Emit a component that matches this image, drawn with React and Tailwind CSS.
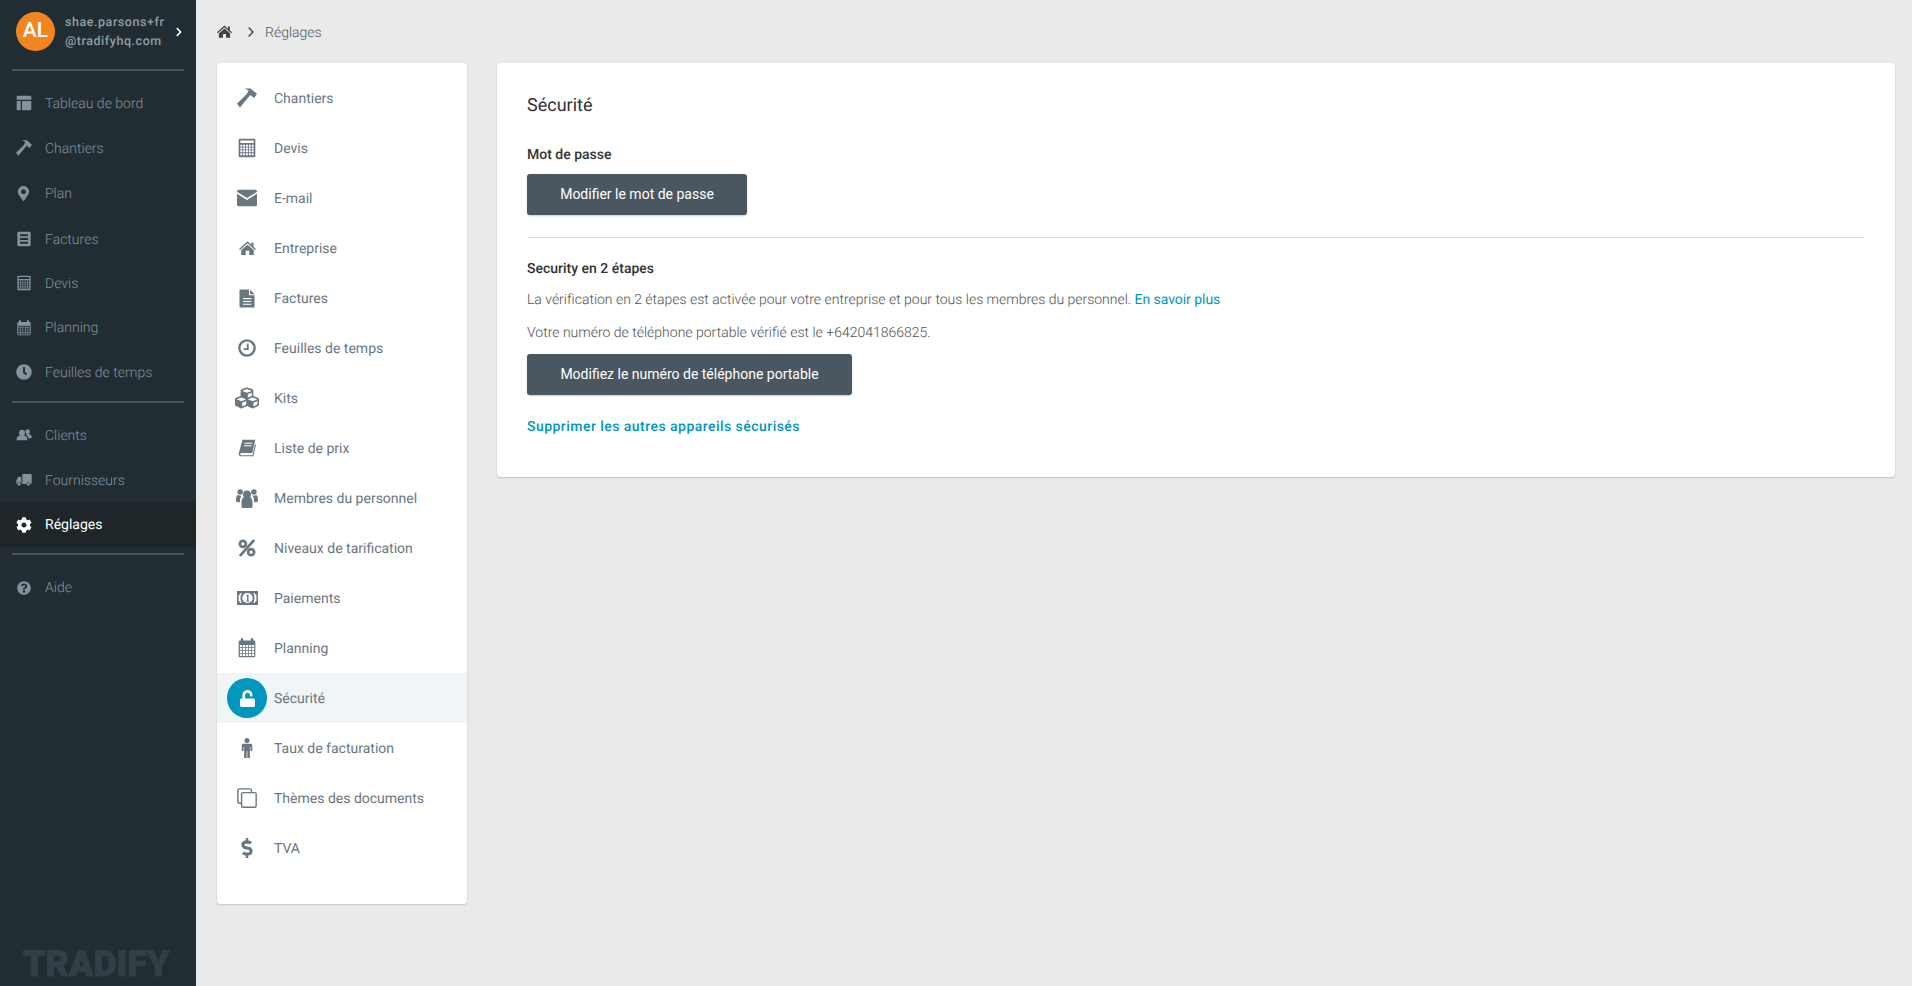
import React from "react";
import { ChevronRight } from "lucide-react";
import { FaMapMarkerAlt, FaClock, FaCog, FaQuestionCircle, FaCubes, FaUnlock, FaDollarSign, FaChevronRight } from "react-icons/fa";

const Hammer = ({ className }) => (
  <svg viewBox="0 0 24 24" className={className} fill="currentColor">
    <path d="M0 19 12 7 14 3 9 .5H16L24 7 20.500 12 16 8.500 3.500 23.500Z" />
  </svg>
);
const Dashboard = ({ className }) => (
  <svg viewBox="0 0 24 24" className={className} fill="currentColor">
    <path d="M3 1h18a2 2 0 0 1 2 2v4H1V3a2 2 0 0 1 2-2ZM1 9h6v14H3a2 2 0 0 1-2-2V9ZM9 9h14v12a2 2 0 0 1-2 2H9V9Z" />
  </svg>
);
const ListAlt = ({ className }) => (
  <svg viewBox="0 0 24 24" className={className} fill="currentColor" fillRule="evenodd">
    <path d="M4 1h16a2 2 0 0 1 2 2v18a2 2 0 0 1-2 2H4a2 2 0 0 1-2-2V3a2 2 0 0 1 2-2ZM6 5v3h12V5H6Zm0 5.500v3h12v-3H6ZM6 16v3h12v-3H6Z" />
  </svg>
);
function holes(xs, ys, w, h) {
  let d = "";
  for (const y of ys) for (const x of xs) d += `M${x} ${y}h${w}v${h}h-${w}Z`;
  return d;
}
const Calculator = ({ className }) => (
  <svg viewBox="0 0 24 24" className={className} fill="currentColor" fillRule="evenodd">
    <path d={"M3.500 1h17A1.500 1.500 0 0 1 22 2.500v19a1.500 1.500 0 0 1-1.500 1.500h-17A1.500 1.500 0 0 1 2 21.500v-19A1.500 1.500 0 0 1 3.500 1ZM4 3v3h16V3H4Z" + holes([4, 7.4, 10.8, 14.2, 17.6], [8, 11.4, 14.8, 18.2], 2.4, 2.4)} />
  </svg>
);
const Calendar = ({ className }) => (
  <svg viewBox="0 0 24 24" className={className} fill="currentColor" fillRule="evenodd">
    <path d={"M6 0a1.500 1.500 0 0 1 1.500 1.500V3h9V1.500a1.500 1.500 0 0 1 3 0V3h1A1.500 1.500 0 0 1 22 4.500v17a1.500 1.500 0 0 1-1.500 1.500h-17A1.500 1.500 0 0 1 2 21.500v-17A1.500 1.500 0 0 1 3.500 3h1V1.500A1.500 1.500 0 0 1 6 0Z" + holes([3.5, 7.1, 10.7, 14.3, 17.9], [8.5, 12, 15.5, 19], 2.7, 2.6)} />
  </svg>
);
const People = ({ className }) => (
  <svg viewBox="0 0 24 18" className={className} fill="currentColor">
    <circle cx="9" cy="5.500" r="4.500" />
    <path d="M1 17c-.6-5 2.500-7.500 8-7.500s8.600 2.500 8 7.500H1Z" />
    <circle cx="17.500" cy="4" r="3.500" />
    <path d="M14.600 8.400c1-.6 2-.8 3.400-.8 3.800 0 6 2 5.500 6.400h-4.800c-.4-2.600-2-4.400-4.100-5.600Z" />
  </svg>
);
const Truck = ({ className }) => (
  <svg viewBox="0 0 24 20" className={className} fill="currentColor">
    <path d="M9.500 1H22a1.500 1.500 0 0 1 1.500 1.500V15a1 1 0 0 1-1 1h-.6a3.500 3.500 0 0 0-6.800 0H9.500V1Z" />
    <path d="M8 5v11h-.100a3.500 3.500 0 0 0-6.800 0H.500v-5.500L3.500 5H8Z" />
    <circle cx="4.500" cy="16.500" r="2.200" />
    <circle cx="18.500" cy="16.500" r="2.200" />
  </svg>
);
const Home = ({ className }) => (
  <svg viewBox="0 0 24 20" className={className} fill="currentColor">
    <path d="M12 .500 17.500 5.500V2H20.500V8L24 11.300 22.800 12.700 12 3.200 1.200 12.700 0 11.300Z" />
    <path d="M12 5.200 21 13V20H14.500V14H9.500V20H3V13Z" />
  </svg>
);
const Envelope = ({ className }) => (
  <svg viewBox="0 0 24 24" className={className} fill="currentColor">
    <path d="M2 2h20a2 2 0 0 1 2 2v.500L12 12 0 4.500V4a2 2 0 0 1 2-2Z" />
    <path d="M0 6.800 12 14.300 24 6.800V20a2 2 0 0 1-2 2H2a2 2 0 0 1-2-2Z" />
  </svg>
);
const FileDoc = ({ className }) => (
  <svg viewBox="0 0 20 24" className={className} fill="currentColor" fillRule="evenodd">
    <path d="M2 .500H12.500V8H19.500V22A1.500 1.500 0 0 1 18 23.500H2A1.500 1.500 0 0 1 .500 22V2A1.500 1.500 0 0 1 2 .500ZM5 11.500V13H15.500V11.500H5ZM5 15V16.500H15.500V15H5ZM5 18.500V20H15.500V18.500H5Z" />
    <path d="M14 .500 19.500 6.500H14Z" />
  </svg>
);
const Clock = ({ className }) => (
  <svg viewBox="0 0 24 24" className={className} fill="none" stroke="currentColor">
    <circle cx="12" cy="12" r="10.200" strokeWidth="3.200" />
    <path d="M13 6v7.500H7.500" strokeWidth="2.400" />
  </svg>
);
const Book = ({ className }) => (
  <svg viewBox="0 0 24 24" className={className} fill="currentColor" fillRule="evenodd">
    <path d="M6 1H23L19 18.500H5C3.600 18.500 3 19.200 3 20.200S3.700 21.700 4.800 21.700H19.300L22.700 6.500 24 7.500 20.500 23H4C1.800 23 .4 21.400 1 19ZM9 5 8.700 6.300H18.800L19.100 5ZM8.200 8.300 7.900 9.600H18L18.300 8.300Z" />
  </svg>
);
const Users = ({ className }) => (
  <svg viewBox="0 0 24 24" className={className} fill="currentColor">
    <circle cx="12" cy="8" r="4.300" />
    <path d="M6 21.500v-5c0-3.500 1.600-5.500 3.500-6 1.500 1.200 3.500 1.200 5 0 1.900.5 3.500 2.500 3.500 6v5c0 1-1 1.500-2 1.500H8c-1 0-2-.5-2-1.500Z" />
    <circle cx="4.500" cy="5.500" r="3" />
    <circle cx="19.500" cy="5.500" r="3" />
    <path d="M0 14.500c0-3.500.6-5.500 2.200-5.800 1 .8 2.600 1.200 4 .7C5 10.800 4.300 13 4.300 16.500H1.500C.6 16.500 0 15.800 0 14.500Z" />
    <path d="M24 14.500c0-3.500-.6-5.500-2.200-5.800-1 .8-2.600 1.200-4 .7 1.200 1.400 1.900 3.600 1.900 7.100h2.800c.9 0 1.500-.7 1.500-2Z" />
  </svg>
);
const Percent = ({ className }) => (
  <svg viewBox="0 0 24 24" className={className} fill="none" stroke="currentColor" strokeWidth="3.600">
    <circle cx="6.500" cy="6.500" r="4" />
    <circle cx="17.500" cy="17.500" r="4" />
    <path d="M20.500 2.500 3.500 21.500" strokeLinecap="round" />
  </svg>
);
const Money = ({ className }) => (
  <svg viewBox="0 0 24 16" className={className} fill="currentColor">
    <path d="M0 0h24v16H0Z" />
    <ellipse cx="12" cy="8" rx="6" ry="5.800" fill="#fff" />
    <path d="M1.800 4.500C3 4 3.700 3.200 4 2.200H5.500C4.500 3.800 4 6 4 8s.5 4.200 1.500 5.800H4C3.700 12.800 3 12 1.800 11.500ZM22.200 4.500C21 4 20.300 3.200 20 2.200H18.500C19.500 3.800 20 6 20 8s-.5 4.200-1.500 5.800H20c.3-1 1-1.800 2.200-2.300Z" fill="#fff" />
    <path d="M10.600 5 12 4h1.200v7H14.200v1H10.400v-1H11.500V5.600l-.6.400Z" />
  </svg>
);
const Man = ({ className }) => (
  <svg viewBox="0 0 24 24" className={className} fill="currentColor">
    <circle cx="12" cy="3" r="3" />
    <path d="M7.500 7h9c1 0 1.800.8 1.800 1.800v6.700h-2.100v-5h-.7V24h-3.100v-8h-.8v8H8.500V10.500h-.7v5H5.700V8.800C5.700 7.800 6.500 7 7.500 7Z" />
  </svg>
);
const Clone = ({ className }) => (
  <svg viewBox="0 0 24 24" className={className} fill="none" stroke="currentColor" strokeWidth="1.700">
    <path d="M4.800 18.300H2.800A1.800 1.800 0 0 1 1 16.500V2.800A1.800 1.800 0 0 1 2.800 1H15.500A1.800 1.800 0 0 1 17.300 2.800V5" />
    <rect x="5.500" y="5.500" width="17.500" height="17.500" rx="1.800" />
  </svg>
);

const groups = [
  [
    ["Tableau de bord", Dashboard, "w-4 h-4"],
    ["Chantiers", Hammer, "w-4 h-4"],
    ["Plan", FaMapMarkerAlt, "w-[15px] h-[15px]"],
    ["Factures", ListAlt, "w-4 h-4", false, "pt-[3px]"],
    ["Devis", Calculator, "w-4 h-4", false, "pt-[1px]"],
    ["Planning", Calendar, "w-4 h-4"],
    ["Feuilles de temps", FaClock, "w-4 h-4"],
  ],
  [
    ["Clients", People, "w-4 h-3"],
    ["Fournisseurs", Truck, "w-4 h-[14px]"],
    ["Réglages", FaCog, "w-4 h-4", true],
  ],
  [["Aide", FaQuestionCircle, "w-[14px] h-[14px]"]],
];

const settings = [
  ["Chantiers", Hammer, "w-5 h-5"],
  ["Devis", Calculator, "w-5 h-5"],
  ["E-mail", Envelope, "w-5 h-5"],
  ["Entreprise", Home, "w-[17px] h-[14px]"],
  ["Factures", FileDoc, "w-4 h-[19px]"],
  ["Feuilles de temps", Clock, "w-[18px] h-[18px]"],
  ["Kits", FaCubes, "w-6 h-6"],
  ["Liste de prix", Book, "w-[18px] h-[18px]"],
  ["Membres du personnel", Users, "w-[22px] h-[22px]"],
  ["Niveaux de tarification", Percent, "w-[18px] h-[18px]"],
  ["Paiements", Money, "w-[21px] h-[14px]"],
  ["Planning", Calendar, "w-5 h-5"],
  ["Sécurité", FaUnlock, "w-[17px] h-[17px]", true],
  ["Taux de facturation", Man, "w-5 h-5"],
  ["Thèmes des documents", Clone, "w-5 h-5"],
  ["TVA", FaDollarSign, "w-5 h-5"],
];

function Divider() {
  return <div className="mx-3 h-[2px] bg-[#47555d]" />;
}

function Sidebar() {
  return (
    <aside className="flex h-screen w-[196px] shrink-0 flex-col bg-[#222d33]">
      <div className="flex h-[69px] items-start pl-4 pt-3">
        <div className="flex h-[39px] w-[39px] shrink-0 items-center justify-center rounded-full bg-[#f2851f] text-[21px] font-medium text-white">
          AL
        </div>
        <div className="ml-[10px] w-[109px] pt-[1px] text-[12.5px] font-medium leading-[19px] tracking-[0.55px] text-[#8f9ea6]">
          <div className="whitespace-nowrap">shae.parsons+fr</div>
          <div className="whitespace-nowrap">@tradifyhq.com</div>
        </div>
        <FaChevronRight className="mt-[15px] h-[10px] w-[10px] text-white" />
      </div>
      <Divider />
      {groups.map((g, i) => (
        <React.Fragment key={i}>
          {i > 0 && (
            <div className="mt-[6px]">
              <Divider />
            </div>
          )}
          <nav className="mt-[10px]">
            {g.map(([label, Icon, size, active, extra]) => (
              <div
                key={label}
                className={`flex h-[44.83px] items-center ${extra || ""} ${active ? "bg-[#1e2629] text-white" : "text-[#84939b]"}`}
              >
                <span className="flex w-[45px] shrink-0 items-center justify-center pl-[2px]">
                  <Icon className={size} />
                </span>
                <span className={`pt-[2px] text-[14px] ${active ? "font-normal" : "font-light"}`}>{label}</span>
              </div>
            ))}
          </nav>
        </React.Fragment>
      ))}
      <div className="mt-auto pb-[1px] pl-[23px] text-[36px] font-black leading-[42px] tracking-[-0.1px] text-[#323f46] blur-[0.5px] [-webkit-text-stroke:1px_#323f46]">
        TRADIFY
      </div>
    </aside>
  );
}

function SettingsCard() {
  return (
    <div className="h-[841px] w-[250px] shrink-0 rounded-[4px] bg-white pt-[10px] shadow-[0_1px_2px_rgba(0,0,0,0.16)]">
      {settings.map(([label, Icon, size, active]) => (
        <div key={label} className={`flex h-[50px] items-center ${active ? "bg-[#f0f5f7]" : ""}`}>
          <span className="-mr-[3px] flex w-[60px] shrink-0 items-center justify-center">
            {active ? (
              <span className="flex h-10 w-10 items-center justify-center rounded-full bg-[#0097bd] text-white">
                <Icon className={size} />
              </span>
            ) : (
              <span className="flex text-[#697781]">
                <Icon className={size} />
              </span>
            )}
          </span>
          <span className="pt-[2px] text-[14px] text-[#697781]">{label}</span>
        </div>
      ))}
    </div>
  );
}

function DarkButton({ children, width }) {
  return (
    <button className={`block h-[41px] ${width} rounded-[3px] bg-[#4a5761] text-center text-[14px] font-normal text-white shadow-[0_1px_2px_rgba(0,0,0,0.2)]`}>
      {children}
    </button>
  );
}

function SecurityCard() {
  return (
    <div className="h-[414px] min-w-0 flex-1 rounded-[4px] bg-white px-[30px] pt-[31px] shadow-[0_1px_2px_rgba(0,0,0,0.16)]">
      <h1 className="text-[18px] font-normal leading-[24px] text-[#333333]">Sécurité</h1>
      <h2 className="mt-[27px] text-[14px] font-medium leading-[20px] text-[#333333]">Mot de passe</h2>
      <div className="mt-[9px]">
        <DarkButton width="w-[220px]">Modifier le mot de passe</DarkButton>
      </div>
      <div className="mt-[22px] h-px bg-[#dcdfe1]" />
      <h2 className="mt-[21px] text-[14px] font-medium leading-[20px] text-[#333333]">Security en 2 étapes</h2>
      <p className="mt-[11px] text-[14px] font-light leading-[20px] tracking-[-0.015px] text-[#4f4f4f]">
        La vérification en 2 étapes est activée pour votre entreprise et pour tous les membres du personnel.{" "}
        <span className="font-normal tracking-[-0.05px] text-[#0097bd]">En savoir plus</span>
      </p>
      <p className="mt-[13px] text-[14px] font-light leading-[20px] text-[#4f4f4f]">
        Votre numéro de téléphone portable vérifié est le +642041866825.
      </p>
      <div className="mt-[11px]">
        <DarkButton width="w-[325px]">Modifiez le numéro de téléphone portable</DarkButton>
      </div>
      <div className="mt-[22px] text-[14px] font-medium leading-[20px] tracking-[0.46px] text-[#0097bd]">
        Supprimer les autres appareils sécurisés
      </div>
    </div>
  );
}

export default function App() {
  return (
    <div className="flex h-screen overflow-hidden bg-[#eaeaea] font-['Roboto',sans-serif] [text-rendering:geometricPrecision]">
      <Sidebar />
      <main className="min-w-0 flex-1 pl-[21px] pr-[17px]">
        <div className="flex h-[63px] items-center text-[#4a5761]">
          <Home className="h-[13px] w-[15px] text-[#37454d]" />
          <ChevronRight className="ml-[11px] h-4 w-4 text-[#37454d]" strokeWidth={2} />
          <span className="ml-[6px] pt-[3px] text-[14px] font-light">Réglages</span>
        </div>
        <div className="flex items-start gap-[30px]">
          <SettingsCard />
          <SecurityCard />
        </div>
      </main>
    </div>
  );
}
